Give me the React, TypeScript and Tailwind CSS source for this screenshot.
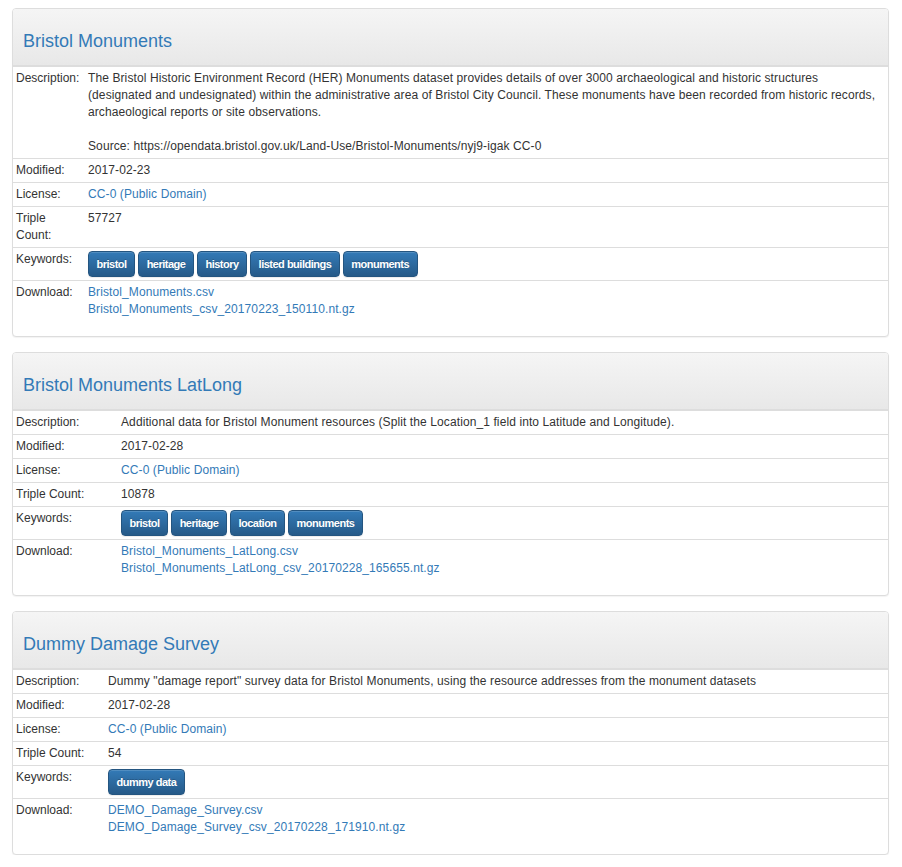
import React from 'react'

interface Dataset {
  title: string
  labelWidth: string
  description: React.ReactNode
  modified: string
  tripleCount: string
  keywords: string[]
  downloads: string[]
}

const datasets: Dataset[] = [
  {
    title: 'Bristol Monuments',
    labelWidth: 'w-[72px]',
    description: (
      <>
        The Bristol Historic Environment Record (HER) Monuments dataset provides details of over 3000 archaeological and
        historic structures
        <br />
        (designated and undesignated) within the administrative area of Bristol City Council. These monuments have been
        recorded from historic records,
        <br />
        archaeological reports or site observations.
        <br />
        <br />
        Source: https://opendata.bristol.gov.uk/Land-Use/Bristol-Monuments/nyj9-igak CC-0
      </>
    ),
    modified: '2017-02-23',
    tripleCount: '57727',
    keywords: ['bristol', 'heritage', 'history', 'listed buildings', 'monuments'],
    downloads: ['Bristol_Monuments.csv', 'Bristol_Monuments_csv_20170223_150110.nt.gz'],
  },
  {
    title: 'Bristol Monuments LatLong',
    labelWidth: 'w-[105px]',
    description:
      'Additional data for Bristol Monument resources (Split the Location_1 field into Latitude and Longitude).',
    modified: '2017-02-28',
    tripleCount: '10878',
    keywords: ['bristol', 'heritage', 'location', 'monuments'],
    downloads: ['Bristol_Monuments_LatLong.csv', 'Bristol_Monuments_LatLong_csv_20170228_165655.nt.gz'],
  },
  {
    title: 'Dummy Damage Survey',
    labelWidth: 'w-[92px]',
    description:
      'Dummy "damage report" survey data for Bristol Monuments, using the resource addresses from the monument datasets',
    modified: '2017-02-28',
    tripleCount: '54',
    keywords: ['dummy data'],
    downloads: ['DEMO_Damage_Survey.csv', 'DEMO_Damage_Survey_csv_20170228_171910.nt.gz'],
  },
]

function Row({ label, children }: { label: string; children: React.ReactNode }) {
  return (
    <tr>
      <td className="border-t border-[#ddd] px-[3px] py-[3px] align-top">{label}</td>
      <td className="border-t border-[#ddd] px-[3px] py-[3px] align-top tracking-[0.1px]">{children}</td>
    </tr>
  )
}

function DatasetPanel({ data }: { data: Dataset }) {
  return (
    <div className="rounded-[4px] border border-[#ddd] bg-white pb-[15px] shadow-[0_1px_1px_rgba(0,0,0,0.05)]">
      {/* Heading */}
      <div className="rounded-t-[3px] border-b border-[#ddd] bg-[linear-gradient(to_bottom,#f5f5f5,#e8e8e8)] pl-[10px] pt-[22px] pb-[14px]">
        <h3 className="text-[18px] leading-[20px] text-[#337ab7]">
          <a href="#">{data.title}</a>
        </h3>
      </div>

      {/* Details table */}
      <table className="w-full table-fixed border-separate border-spacing-0">
        <colgroup>
          <col className={data.labelWidth} />
          <col />
        </colgroup>
        <tbody>
          <Row label="Description:">{data.description}</Row>
          <Row label="Modified:">{data.modified}</Row>
          <Row label="License:">
            <a href="#" className="text-[#337ab7]">
              CC-0 (Public Domain)
            </a>
          </Row>
          <Row label="Triple Count:">{data.tripleCount}</Row>
          <Row label="Keywords:">
            <div className="flex flex-wrap gap-[3px]">
              {data.keywords.map((k) => (
                <a
                  key={k}
                  href="#"
                  className="flex h-[26px] items-center rounded-[4px] border border-[#245580] bg-[linear-gradient(to_bottom,#337ab7,#265a88)] px-[7.5px] text-[11px] font-bold leading-[14px] tracking-[-0.5px] text-white shadow-[inset_0_1px_0_rgba(255,255,255,0.15),0_1px_1px_rgba(0,0,0,0.075)] [text-shadow:0_-1px_0_rgba(0,0,0,0.2)]"
                >
                  {k}
                </a>
              ))}
            </div>
          </Row>
          <Row label="Download:">
            {data.downloads.map((d) => (
              <a key={d} href="#" className="block text-[#337ab7]">
                {d}
              </a>
            ))}
          </Row>
        </tbody>
      </table>
    </div>
  )
}

export default function App() {
  return (
    <div className="bg-white pl-[12px] pt-[8px] font-['Liberation_Sans',Arial,sans-serif] text-[12px] leading-[17px] text-[#333]">
      <div className="flex w-[877px] flex-col gap-[15px]">
        {datasets.map((d) => (
          <DatasetPanel key={d.title} data={d} />
        ))}
      </div>
    </div>
  )
}
